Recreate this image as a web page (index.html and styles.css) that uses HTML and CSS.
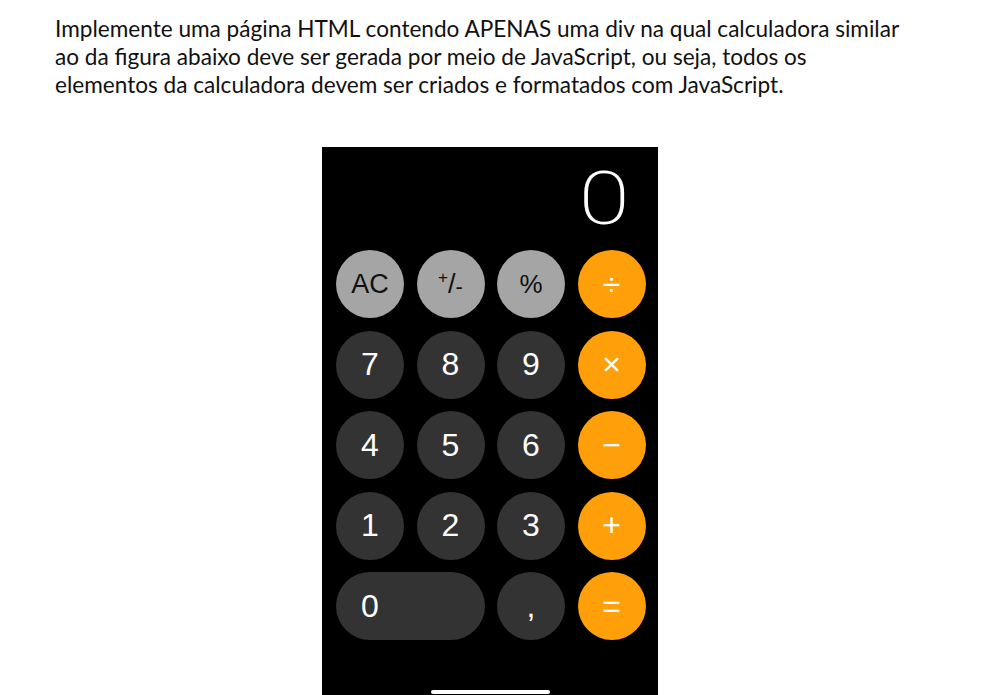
FILE: index.html
```html
<!DOCTYPE html>
<html lang="pt">
<head>
<meta charset="utf-8">
<title>Calculadora</title>
<link rel="stylesheet" href="styles.css">
</head>
<body>
<p class="prompt">Implemente uma página HTML contendo APENAS uma div na qual calculadora similar<br>ao da figura abaixo deve ser gerada por meio de JavaScript, ou seja, todos os<br>elementos da calculadora devem ser criados e formatados com JavaScript.</p>
<div class="stage">
  <div class="calc">
    <div class="display"><span class="display-value">0</span></div>
    <div class="keys">
      <div class="key fn ac">AC</div>
      <div class="key fn sign"><span class="sup">+</span>/<span class="sub">-</span></div>
      <div class="key fn pct">%</div>
      <div class="key op">÷</div>
      <div class="key num">7</div>
      <div class="key num">8</div>
      <div class="key num">9</div>
      <div class="key op">×</div>
      <div class="key num">4</div>
      <div class="key num">5</div>
      <div class="key num">6</div>
      <div class="key op">−</div>
      <div class="key num">1</div>
      <div class="key num">2</div>
      <div class="key num">3</div>
      <div class="key op">+</div>
      <div class="key num zero"><span class="zero-label">0</span></div>
      <div class="key num">,</div>
      <div class="key op">=</div>
    </div>
    <div class="home-bar"></div>
  </div>
</div>
</body>
</html>
```
FILE: styles.css
```css
html, body {
  margin: 0;
  padding: 0;
  background: #fff;
  overflow: hidden;
}
.prompt {
  margin: 0;
  padding: 15px 0 0 55px;
  font-family: Lato, "Open Sans", sans-serif;
  font-size: 22.6px;
  line-height: 28px;
  color: #111;
}
.stage {
  display: flex;
  padding-left: 322px;
  margin-top: 48px;
}
.calc {
  width: 336px;
  height: 560px;
  background: #000;
  display: flex;
  flex-direction: column;
}
.display {
  box-sizing: border-box;
  height: 103px;
  padding: 15px 28px 0 0;
  text-align: right;
  color: #fff;
  font-family: Roboto, sans-serif;
  font-weight: 200;
  font-size: 74px;
  line-height: 74px;
}
.display-value {
  display: inline-block;
  transform: scaleX(1.25);
  transform-origin: right center;
}
.keys {
  display: grid;
  grid-template-columns: repeat(4, 68px);
  grid-auto-rows: 68px;
  gap: 12.5px;
  padding-left: 14px;
}
.key {
  border-radius: 34px;
  display: flex;
  align-items: center;
  justify-content: center;
  font-family: "Liberation Sans", Arial, sans-serif;
  font-size: 32px;
  color: #fff;
}
.fn {
  background: #a5a5a5;
  color: #111;
}
.num {
  background: #333333;
}
.op {
  background: #ff9f0a;
  font-size: 32px;
}
.ac {
  font-size: 27px;
}
.pct {
  font-size: 26px;
}
.sign {
  font-size: 27px;
}
.sup {
  font-size: 17px;
  position: relative;
  top: -6px;
}
.sub {
  font-size: 22px;
  position: relative;
  top: 3px;
}
.zero {
  grid-column: span 2;
  justify-content: flex-start;
}
.zero-label {
  width: 68px;
  text-align: center;
}
.home-bar {
  width: 119px;
  height: 4px;
  border-radius: 2px;
  background: #fff;
  margin: 50px 0 0 109px;
}
```
